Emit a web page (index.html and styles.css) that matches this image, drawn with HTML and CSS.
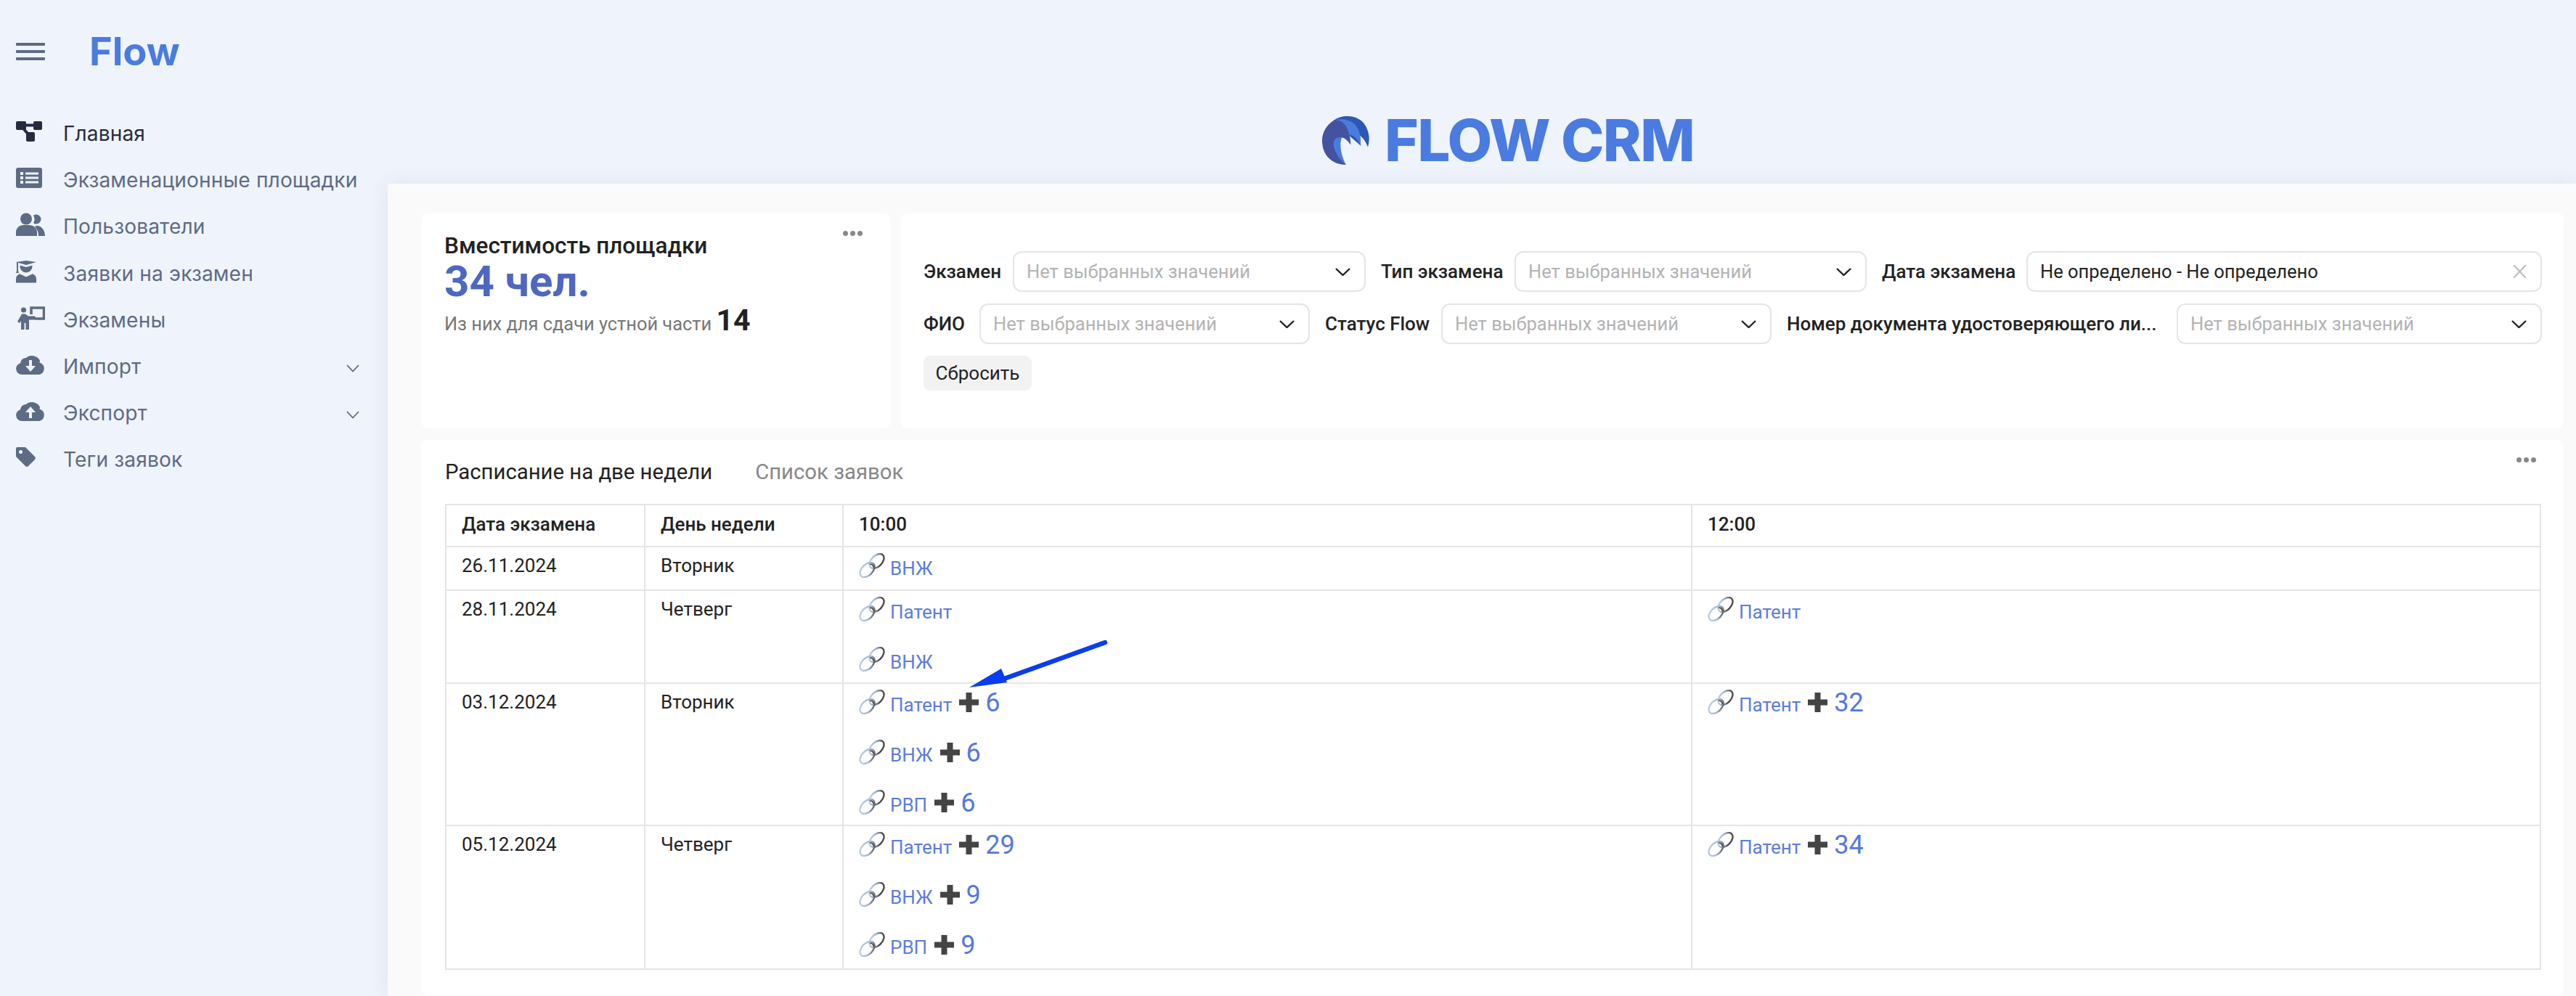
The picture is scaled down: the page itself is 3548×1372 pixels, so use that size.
FILE: index.html
```html
<!DOCTYPE html>
<html lang="ru">
<head>
<meta charset="utf-8">
<title>Flow CRM</title>
<link rel="stylesheet" href="styles.css">
</head>
<body>
<svg class="defs" width="0" height="0" aria-hidden="true">
  <defs>
    <linearGradient id="ringA" x1="0" y1="0" x2="1" y2="1">
      <stop offset="0" stop-color="#d4e0ee"/><stop offset=".4" stop-color="#9fb0c4"/><stop offset=".72" stop-color="#4a4648"/><stop offset="1" stop-color="#55504f"/>
    </linearGradient>
    <linearGradient id="ringB" x1="0" y1="0" x2="1" y2="1">
      <stop offset="0" stop-color="#c2d2e4"/><stop offset=".6" stop-color="#a9bbd0"/><stop offset="1" stop-color="#38383c"/>
    </linearGradient>
    <symbol id="chain" viewBox="0 0 36 34">
      <ellipse cx="24.500" cy="11" rx="12" ry="7.500" transform="rotate(-45 24.500 11)" fill="none" stroke="url(#ringA)" stroke-width="2.400"/>
      <ellipse cx="11.500" cy="23" rx="12" ry="7.500" transform="rotate(-45 11.500 23)" fill="none" stroke="url(#ringB)" stroke-width="2.400"/>
      <path d="M15 15.500c2-1 5 1 5.500 4.500" fill="none" stroke="#55504f" stroke-width="1.800"/>
    </symbol>
    <symbol id="plus" viewBox="0 0 27 27">
      <path d="M9.500 0h8v9.500h9.500v8h-9.500v9.500h-8v-9.500h-9.500v-8h9.500z" fill="#444"/>
    </symbol>
    <symbol id="chev" viewBox="0 0 21 11">
      <path d="M1 1l9.500 9L20 1" fill="none" stroke="#222" stroke-width="2.400"/>
    </symbol>
  </defs>
</svg>

<div class="app">
  <aside class="sidebar">
    <div class="brand">
      <div class="burger"><i></i><i></i><i></i></div>
      <div class="wordmark">Flow</div>
    </div>
    <nav class="nav">
      <a class="nav-item active">
        <svg class="nav-icon" viewBox="0 0 40 32"><g fill="currentColor"><rect x="0" y="2" width="14" height="12" rx="2"/><rect x="24" y="2" width="12" height="12" rx="2"/><rect x="14" y="17" width="12" height="13" rx="2"/></g><path d="M12 7.500h14M8 10l11 12" fill="none" stroke="currentColor" stroke-width="4"/></svg>
        <span>Главная</span>
      </a>
      <a class="nav-item">
        <svg class="nav-icon" viewBox="0 0 40 32"><path fill="currentColor" fill-rule="evenodd" d="M3 2h30a3 3 0 0 1 3 3v22a3 3 0 0 1-3 3H3a3 3 0 0 1-3-3V5a3 3 0 0 1 3-3zM6 8h4v4H6zM6 14h4v4H6zM6 20h4v4H6zM13 8.500h18v3H13zM13 14.500h18v3H13zM13 20.500h18v3H13z"/></svg>
        <span>Экзаменационные площадки</span>
      </a>
      <a class="nav-item">
        <svg class="nav-icon" viewBox="0 0 40 32"><circle cx="14" cy="8.500" r="8" fill="currentColor"/><path fill="currentColor" d="M28 2.500a6.500 6.500 0 1 1 0 13 7 7 0 0 1-4-1.300 10 10 0 0 0 0-10.400 7 7 0 0 1 4-1.300zM0 27c0-6 5-10 10-10h8c6 0 11 4 11 10v5H0z"/><path fill="currentColor" d="M29 18c6 0 11 6 11 14h-9c0-6-2-9-5-12.500 1-.8 2-1.500 3-1.500z"/></svg>
        <span>Пользователи</span>
      </a>
      <a class="nav-item">
        <svg class="nav-icon" viewBox="0 0 40 32"><g fill="currentColor"><path d="M0 3l14-2 14 2-14 4z"/><path d="M1 3h2v12l1 3H0l1-3z"/><path d="M5.500 7.500L14 10l8.500-2.500V9a8.500 8.500 0 0 1-17 0z"/><path d="M0 26c0-3 2-5.500 5-6.700l9 4.300 9-4.300c3 1.200 5 3.700 5 6.700v5.500H0z"/></g></svg>
        <span>Заявки на экзамен</span>
      </a>
      <a class="nav-item">
        <svg class="nav-icon" viewBox="0 0 40 32"><circle cx="10.500" cy="5" r="3.600" fill="currentColor"/><path d="M21 11V2h17.500v15H27" fill="none" stroke="currentColor" stroke-width="3.600"/><path fill="currentColor" d="M8 10.500h5l4 3h9l2.500 5H18v13.500h-4.500v-9h-2v9H7V20l-2 3-3-2z"/></svg>
        <span>Экзамены</span>
      </a>
      <a class="nav-item">
        <svg class="nav-icon" viewBox="0 0 40 32"><path fill="currentColor" fill-rule="evenodd" d="M8 30a8 8 0 0 1-2-15.700A8 8 0 0 1 14 7 12 12 0 0 1 33 11c-.1 1-.3 1.600-.5 2.500A8.500 8.500 0 0 1 32 30zM18 10v8h-5l7 8 7-8h-5v-8z"/></svg>
        <span>Импорт</span>
        <svg class="nav-chev" viewBox="0 0 18 11"><path d="M1 1l8 8.500L17 1" fill="none" stroke="#5d6b85" stroke-width="1.800"/></svg>
      </a>
      <a class="nav-item">
        <svg class="nav-icon" viewBox="0 0 40 32"><path fill="currentColor" fill-rule="evenodd" d="M8 30a8 8 0 0 1-2-15.700A8 8 0 0 1 14 7 12 12 0 0 1 33 11c-.1 1-.3 1.600-.5 2.500A8.500 8.500 0 0 1 32 30zM18 26v-8h-5l7-8 7 8h-5v8z"/></svg>
        <span>Экспорт</span>
        <svg class="nav-chev" viewBox="0 0 18 11"><path d="M1 1l8 8.500L17 1" fill="none" stroke="#5d6b85" stroke-width="1.800"/></svg>
      </a>
      <a class="nav-item">
        <svg class="nav-icon" viewBox="0 0 40 32"><path fill="currentColor" fill-rule="evenodd" d="M2 2h10a3 3 0 0 1 2 1l12 12a3 3 0 0 1 0 4l-9 9a3 3 0 0 1-4 0L1 16a3 3 0 0 1-1-2V4a2 2 0 0 1 2-2zM6.500 6a2.500 2.500 0 1 0 0 5 2.500 2.500 0 0 0 0-5z"/></svg>
        <span>Теги заявок</span>
      </a>
    </nav>
  </aside>

  <main class="main">
    <header class="hero">
      <svg class="logo-mark" viewBox="165 83 165 192" preserveAspectRatio="none">
        <path fill="#2b57b5" d="M205 100C235 75 285 78 310 110c20 28 23 62 15 95-6-18-15-33-27-45l2 40-60-60z"/>
        <path fill="#4a7ce0" d="M205 100c20-10 60-6 78 20 12 16 17 40 17 80-8-20-20-40-38-44l3 38-50-90z"/>
        <path fill="#44539f" d="M205 100c30-8 47 20 55 55l5 42c-8-14-18-26-30-30-14 10-12 60 13 108-50 0-83-40-83-95 0-34 16-62 40-80z"/>
        <path fill="#4a7ce0" d="M235 167c-8 15-10 55 13 108-24-20-44-60-43-85 1-20 18-27 30-23z"/>
      </svg>
      <div class="logo-text">FLOW CRM</div>
    </header>

    <div class="content">
      <section class="card stat">
        <div class="dots"><i></i><i></i><i></i></div>
        <div class="stat-title">Вместимость площадки</div>
        <div class="stat-value">34 чел.</div>
        <div class="stat-sub">Из них для сдачи устной части <b>14</b></div>
      </section>

      <section class="card filters">
        <div class="filter-row row-a">
          <label class="f-label first">Экзамен</label>
          <div class="select"><span class="ph">Нет выбранных значений</span><svg class="chev"><use href="#chev"/></svg></div>
          <label class="f-label">Тип экзамена</label>
          <div class="select"><span class="ph">Нет выбранных значений</span><svg class="chev"><use href="#chev"/></svg></div>
          <label class="f-label">Дата экзамена</label>
          <div class="select date"><span class="val">Не определено - Не определено</span><svg class="clear" viewBox="0 0 19 18"><path d="M1 0l17 18M18 0L1 18" fill="none" stroke="#bbb" stroke-width="2"/></svg></div>
        </div>
        <div class="filter-row row-b">
          <label class="f-label first">ФИО</label>
          <div class="select"><span class="ph">Нет выбранных значений</span><svg class="chev"><use href="#chev"/></svg></div>
          <label class="f-label">Статус Flow</label>
          <div class="select"><span class="ph">Нет выбранных значений</span><svg class="chev"><use href="#chev"/></svg></div>
          <label class="f-label">Номер документа удостоверяющего ли...</label>
          <div class="select"><span class="ph">Нет выбранных значений</span><svg class="chev"><use href="#chev"/></svg></div>
        </div>
        <button class="reset">Сбросить</button>
      </section>

      <section class="card schedule">
        <div class="dots"><i></i><i></i><i></i></div>
        <div class="tabs">
          <span class="tab on">Расписание на две недели</span>
          <span class="tab">Список заявок</span>
        </div>
        <table class="grid">
          <colgroup><col class="c-date"><col class="c-day"><col class="c-slot"><col class="c-slot"></colgroup>
          <thead>
            <tr class="h"><th>Дата экзамена</th><th>День недели</th><th>10:00</th><th>12:00</th></tr>
          </thead>
          <tbody>
            <tr class="r1">
              <td>26.11.2024</td><td>Вторник</td>
              <td><div class="entry"><svg class="chain"><use href="#chain"/></svg><a class="lnk">ВНЖ</a></div></td>
              <td></td>
            </tr>
            <tr class="r2">
              <td>28.11.2024</td><td>Четверг</td>
              <td>
                <div class="entry"><svg class="chain"><use href="#chain"/></svg><a class="lnk">Патент</a></div>
                <div class="entry"><svg class="chain"><use href="#chain"/></svg><a class="lnk">ВНЖ</a></div>
              </td>
              <td><div class="entry"><svg class="chain"><use href="#chain"/></svg><a class="lnk">Патент</a></div></td>
            </tr>
            <tr class="r3">
              <td>03.12.2024</td><td>Вторник</td>
              <td>
                <div class="entry"><svg class="chain"><use href="#chain"/></svg><a class="lnk">Патент</a><svg class="plus"><use href="#plus"/></svg><a class="num">6</a></div>
                <div class="entry"><svg class="chain"><use href="#chain"/></svg><a class="lnk">ВНЖ</a><svg class="plus"><use href="#plus"/></svg><a class="num">6</a></div>
                <div class="entry"><svg class="chain"><use href="#chain"/></svg><a class="lnk">РВП</a><svg class="plus"><use href="#plus"/></svg><a class="num">6</a></div>
              </td>
              <td><div class="entry"><svg class="chain"><use href="#chain"/></svg><a class="lnk">Патент</a><svg class="plus"><use href="#plus"/></svg><a class="num">32</a></div></td>
            </tr>
            <tr class="r4">
              <td>05.12.2024</td><td>Четверг</td>
              <td>
                <div class="entry"><svg class="chain"><use href="#chain"/></svg><a class="lnk">Патент</a><svg class="plus"><use href="#plus"/></svg><a class="num">29</a></div>
                <div class="entry"><svg class="chain"><use href="#chain"/></svg><a class="lnk">ВНЖ</a><svg class="plus"><use href="#plus"/></svg><a class="num">9</a></div>
                <div class="entry"><svg class="chain"><use href="#chain"/></svg><a class="lnk">РВП</a><svg class="plus"><use href="#plus"/></svg><a class="num">9</a></div>
              </td>
              <td><div class="entry"><svg class="chain"><use href="#chain"/></svg><a class="lnk">Патент</a><svg class="plus"><use href="#plus"/></svg><a class="num">34</a></div></td>
            </tr>
          </tbody>
        </table>
      </section>
    </div>
  </main>
</div>

<svg class="arrow" viewBox="0 0 200 80" aria-hidden="true">
  <path d="M187 5L48 55" fill="none" stroke="#0a3df0" stroke-width="6.500" stroke-linecap="round"/>
  <path d="M44 41L52 60 0 67z" fill="#0a3df0"/>
</svg>
</body>
</html>
```
FILE: styles.css
```css
* { box-sizing: border-box; }
html, body { margin: 0; height: 100%; }
body {
  position: relative;
  width: 3548px;
  height: 1372px;
  overflow: hidden;
  background: #eff3fb;
  font-family: Roboto, "Noto Sans", sans-serif;
  color: #222;
}
.defs { position: absolute; }
.app { display: flex; height: 100%; }

/* Sidebar */
.sidebar { flex: 0 0 534px; padding-left: 22px; }
.brand { display: flex; align-items: center; height: 142px; }
.burger { width: 40px; display: flex; flex-direction: column; gap: 6px; }
.burger i { display: block; height: 4px; background: #5d6b85; border-radius: 1px; }
.wordmark {
  margin-left: 61px;
  font: 700 54px/1 Inter, sans-serif;
  color: #4a7be0;
}
.nav { display: flex; flex-direction: column; margin-top: 10px; }
.nav-item {
  display: flex;
  align-items: center;
  height: 64.2px;
  padding-right: 39px;
  font: 400 28px/1 Inter, sans-serif;
  letter-spacing: .2px;
  color: #5d6b85;
}
.nav-item.active { color: #252c3f; }
.nav-icon { flex: none; width: 40px; height: 32px; margin-right: 25px; margin-top: -6px; }
.nav-item span { flex: 1; white-space: nowrap; }
.nav-chev { flex: none; width: 18px; height: 11px; margin-top: 4px; }

/* Main */
.main {
  flex: 1;
  min-width: 0;
  display: flex;
  flex-direction: column;
}
.hero {
  flex: 0 0 253px;
  display: flex;
  align-items: center;
  justify-content: center;
  gap: 21px;
  padding: 133px 0 0 72px;
}
.logo-mark { width: 65px; height: 67px; flex: none; }
.logo-text {
  font: 800 80px/1 Inter, sans-serif;
  letter-spacing: -1.600px;
  color: #4a7be0;
}
.content {
  flex: 1;
  display: grid;
  grid-template-columns: 645px 1fr;
  grid-template-rows: 296px 1fr;
  gap: 16px 15px;
  padding: 41px 17px 0 47px;
  background: #fafafa;
  box-shadow: 0 0 26px rgba(70, 80, 120, .09);
}
.card { position: relative; background: #fff; border-radius: 8px; }
.dots { position: absolute; right: 38px; top: 24px; display: flex; gap: 3px; }
.dots i { width: 7px; height: 7px; border-radius: 50%; background: #888; }

/* Stat card */
.stat { padding: 26px 31px; }
.stat-title { font-size: 31.500px; line-height: 38px; font-weight: 500; color: #222; }
.stat-value { font-size: 60px; line-height: 60px; font-weight: 700; color: #4e67c0; }
.stat-sub { margin-top: 0; font-size: 25.400px; line-height: 46px; color: #777; white-space: nowrap; }
.stat-sub b { font-size: 41px; font-weight: 700; color: #222; }

/* Filters */
.filters { padding: 52px 30px 0 31px; }
.filter-row { display: grid; margin-bottom: 16px; align-items: center; }
.row-a { grid-template-columns: 123px 486px 205px 485px 220px 1fr; }
.row-b { grid-template-columns: 77px 455px 181px 455px 558px 1fr; }
.f-label { font-size: 26px; font-weight: 500; color: #222; padding-left: 21px; white-space: nowrap; }
.f-label.first { padding-left: 0; }
.select {
  display: flex;
  align-items: center;
  justify-content: space-between;
  height: 56px;
  padding: 0 19px 0 17px;
  border: 2px solid #e5e5e5;
  border-radius: 12px;
  font-size: 25.500px;
}
.ph { color: #b3b3b3; }
.val { color: #222; }
.chev { width: 21px; height: 11px; flex: none; }
.clear { width: 19px; height: 18px; flex: none; }
.reset {
  display: block;
  width: 149px;
  height: 48px;
  border: 0;
  border-radius: 9px;
  background: #f2f2f2;
  font: 400 26px/1 Roboto, sans-serif;
  color: #222;
  padding: 0;
}

/* Schedule */
.schedule { grid-column: 1 / -1; padding: 18px 33px 0 32px; }
.tabs { display: flex; align-items: center; gap: 59px; height: 52px; margin-bottom: 18px; }
.tab { font-size: 29.300px; color: #888; }
.tab.on { color: #222; }
.grid {
  width: 2885px;
  table-layout: fixed;
  border-collapse: collapse;
  font-size: 26px;
}
.c-date { width: 274px; }
.c-day { width: 273px; }
.c-slot { width: 1169px; }
.grid th, .grid td {
  border: 2px solid #e5e5e5;
  padding: 8px 21px 0;
  vertical-align: top;
  text-align: left;
  line-height: 36px;
}
.grid th { font-weight: 500; padding-top: 8px; }
.grid td:nth-child(-n+2) { padding-top: 7px; }
.h { height: 58px; }
.r1 { height: 60px; }
.r2 { height: 128px; }
.r3 { height: 196px; }
.r4 { height: 198px; }
.entry { display: flex; align-items: flex-end; height: 34px; }
.entry + .entry { margin-top: 35px; }
.chain { flex: none; width: 36px; height: 34px; margin-right: 7px; }
.lnk { font-size: 26px; line-height: 26px; color: #5b7ce0; }
.plus { flex: none; width: 27px; height: 27px; margin: 0 9px 3px 10px; }
.num { font-size: 36px; line-height: 36px; color: #5578e0; margin-bottom: -2px; }

/* Annotation drawn on top of the screenshot */
.arrow { position: absolute; left: 1335px; top: 880px; width: 200px; height: 80px; z-index: 5; }
```
